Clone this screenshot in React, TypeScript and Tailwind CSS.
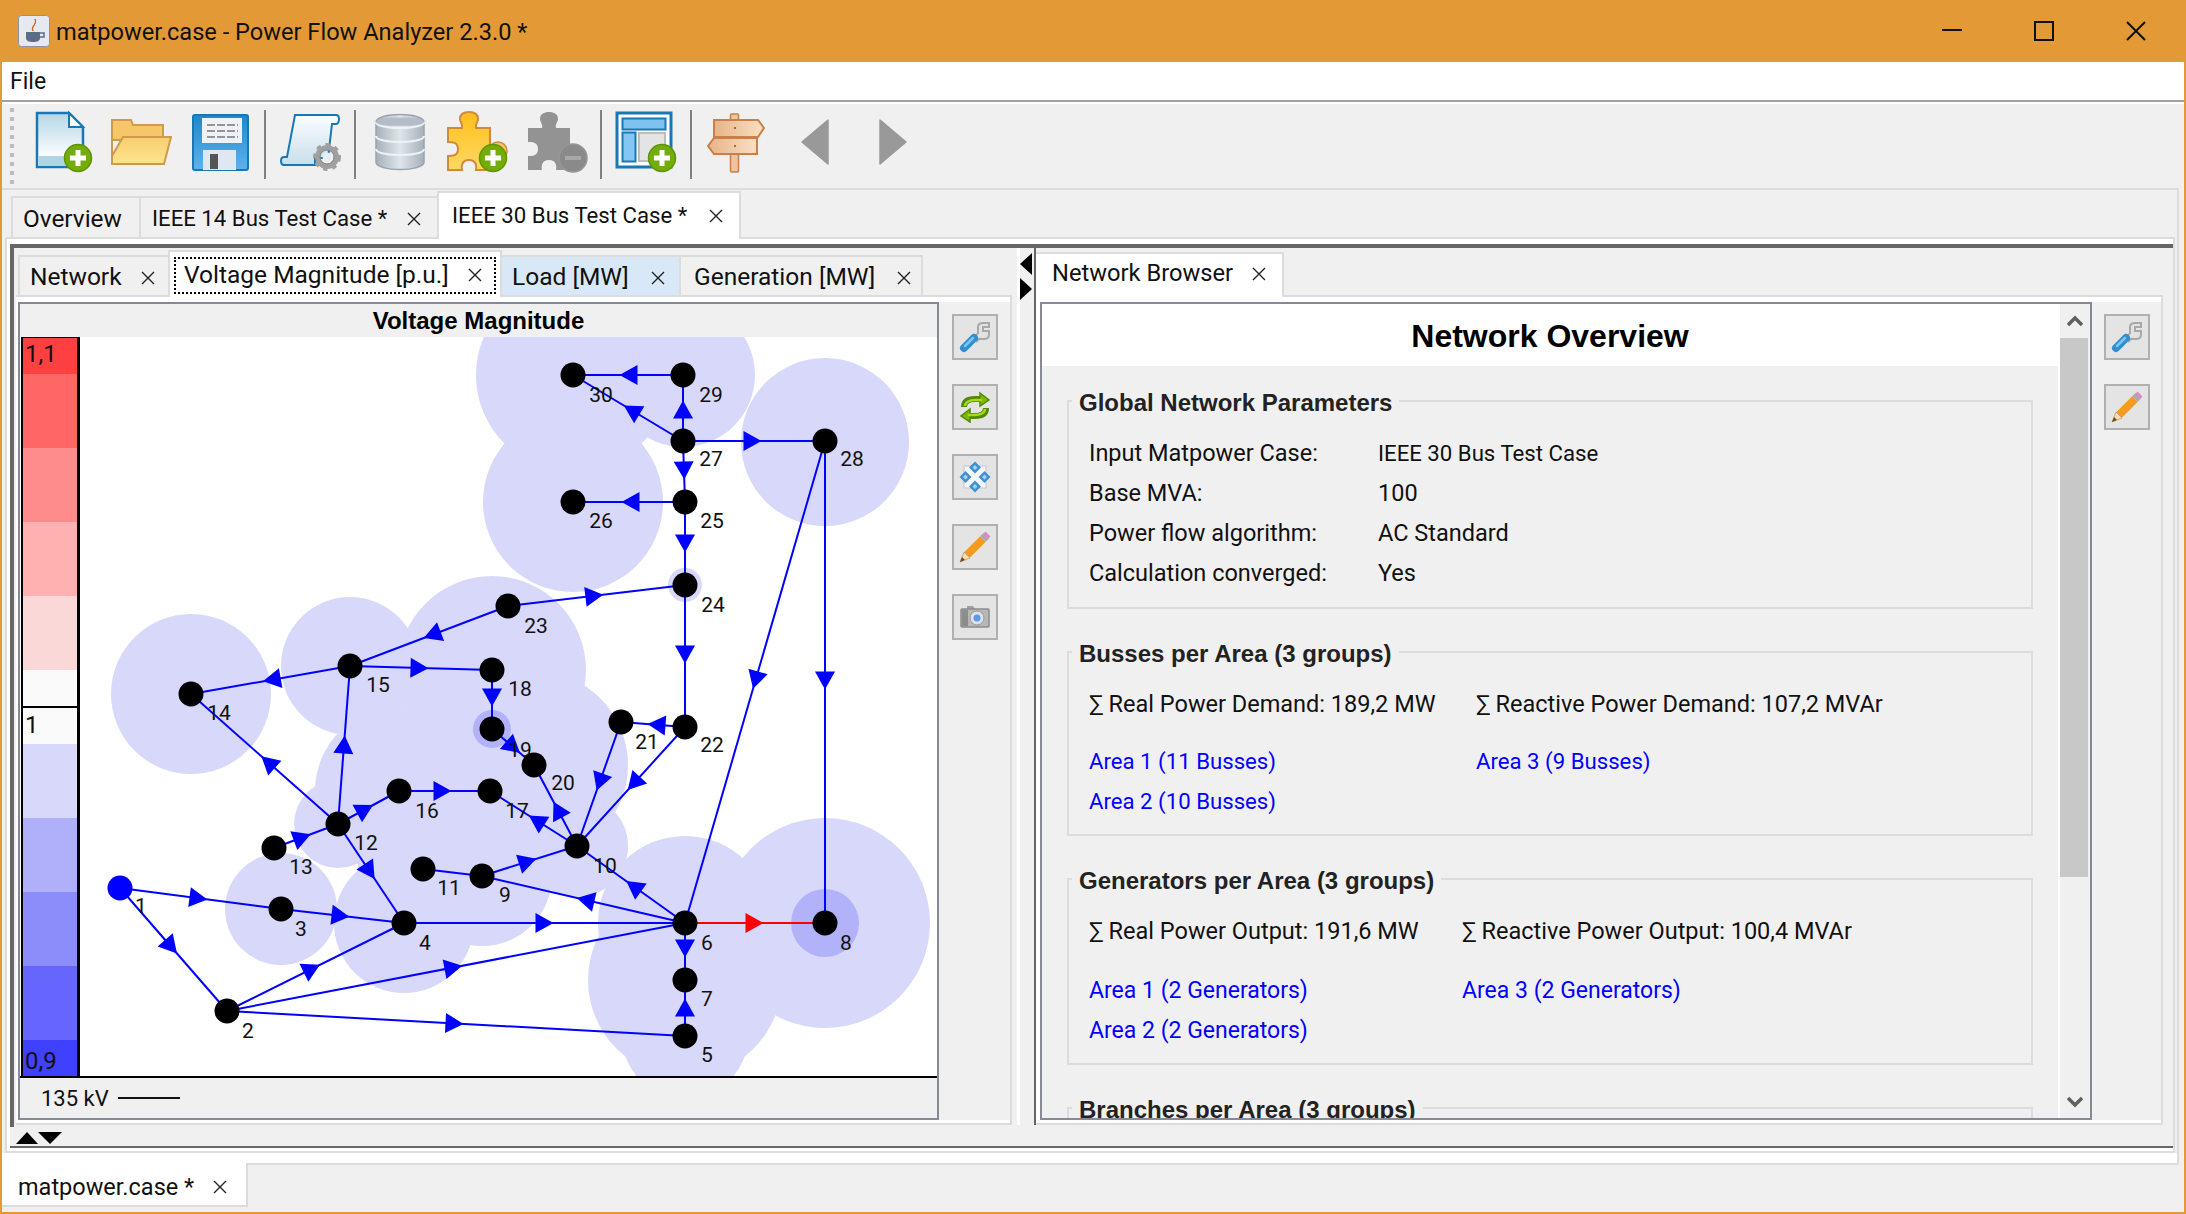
import type { ReactNode } from 'react';

const ui = "font-['Roboto',sans-serif]";

function TabClose({ className = '' }: { className?: string }) {
  return (
    <svg width="14" height="14" viewBox="0 0 14 14" className={`shrink-0 ${className}`}>
      <path d="M1 1L13 13M13 1L1 13" stroke="#222" strokeWidth="1.4" fill="none" />
    </svg>
  );
}

function PlusBadge({ cx, cy }: { cx: number; cy: number }) {
  return (
    <g>
      <circle cx={cx} cy={cy} r="13.5" fill="#74ad08" stroke="#5f9400" strokeWidth="1.5" />
      <rect x={cx - 8} y={cy - 2.5} width="16" height="5" fill="#fff" />
      <rect x={cx - 2.5} y={cy - 8} width="5" height="16" fill="#fff" />
    </g>
  );
}

const puzzlePath =
  'M4 18H18C19 14 16 12 16 9C16 4 20 2 25 2C30 2 34 4 34 9C34 12 31 14 32 18H46V60H32C33 56 32 50 25 50C18 50 17 56 18 60H4V46C8 46 14 46 14 39C14 32 8 32 4 32Z';

function ToolIcon({ children, className = 'ml-[12px]' }: { children: ReactNode; className?: string }) {
  return (
    <svg width="64" height="66" viewBox="0 0 64 66" className={`shrink-0 ${className}`}>
      {children}
    </svg>
  );
}

function Sep() {
  return <div className="ml-[12px] w-[2px] h-[69px] bg-[#808080] shrink-0" />;
}

function Toolbar() {
  return (
    <div className="h-[84px] pt-[6px] pl-[8px] flex items-start bg-[#f0f0f0]">
      <div className="flex flex-col gap-[5px] mt-[-2px] shrink-0">
        {[0, 1, 2, 3, 4, 5, 6, 7, 8].map((i) => (
          <div key={i} className="w-[4px] h-[4px] bg-[#bcbcbc]" />
        ))}
      </div>
      <ToolIcon className="ml-[18px]">
        <defs>
          <linearGradient id="paper" x1="0" y1="0" x2="0" y2="1">
            <stop offset="0" stopColor="#b6d6e6" />
            <stop offset="0.8" stopColor="#fafdff" />
          </linearGradient>
        </defs>
        <path d="M5 3H37L51 17V57H5Z" fill="url(#paper)" stroke="#1878b4" strokeWidth="2.5" />
        <rect x="6.5" y="46" width="43" height="10" fill="#b0d4e6" />
        <path d="M37 3V17H51Z" fill="#fff" stroke="#1878b4" strokeWidth="2" />
        <PlusBadge cx={46} cy={48} />
      </ToolIcon>
      <ToolIcon>
        <defs>
          <linearGradient id="folder" x1="0" y1="0" x2="0" y2="1">
            <stop offset="0" stopColor="#f8cd70" />
            <stop offset="1" stopColor="#fde58e" />
          </linearGradient>
        </defs>
        <path d="M4 10H23L25 15H55V30H4Z" fill="#f6c768" stroke="#cf9a4e" strokeWidth="2" />
        <path d="M4 10V54" stroke="#cf9a4e" strokeWidth="2" />
        <path d="M15 27H63L56 54H4V46Z" fill="url(#folder)" stroke="#cf9a4e" strokeWidth="2" />
      </ToolIcon>
      <ToolIcon className="ml-[16px]">
        <defs>
          <linearGradient id="disk" x1="0" y1="0" x2="0" y2="1">
            <stop offset="0" stopColor="#1f87cc" />
            <stop offset="1" stopColor="#5fb2ea" />
          </linearGradient>
        </defs>
        <rect x="5" y="5" width="55" height="55" rx="2" fill="url(#disk)" stroke="#1878b4" strokeWidth="2" />
        <rect x="14" y="8" width="40" height="25" fill="#eef2f6" />
        <path d="M19 15H50M19 21H50M19 27H50" stroke="#777" strokeWidth="1.5" strokeDasharray="8 2" />
        <rect x="15" y="40" width="33" height="20" fill="#dfe7f2" />
        <rect x="22" y="44" width="8" height="15" fill="#555" />
      </ToolIcon>
      <Sep />
      <ToolIcon>
        <defs>
          <linearGradient id="scroll" x1="0" y1="0" x2="0" y2="1">
            <stop offset="0" stopColor="#fafdff" />
            <stop offset="1" stopColor="#c8deec" />
          </linearGradient>
        </defs>
        <path
          d="M17 5H58C62 5 62 13 58 14H54L50 48H37V55H6C2 55 2 47 6 47H9Z"
          fill="url(#scroll)"
          stroke="#1878b4"
          strokeWidth="2"
        />
        <circle cx="49" cy="47" r="9.5" fill="none" stroke="#a0a0a0" strokeWidth="5" />
        <circle cx="49" cy="47" r="12.5" fill="none" stroke="#a0a0a0" strokeWidth="3" strokeDasharray="4.5 5" />
        <circle cx="49" cy="47" r="7" fill="none" stroke="#808080" strokeWidth="1" />
        <circle cx="49" cy="47" r="4.5" fill="#e6eef4" />
      </ToolIcon>
      <Sep />
      <ToolIcon>
        <defs>
          <linearGradient id="db" x1="0" y1="0" x2="1" y2="0">
            <stop offset="0" stopColor="#a6b0bb" />
            <stop offset="0.5" stopColor="#dfe5ea" />
            <stop offset="1" stopColor="#a6b0bb" />
          </linearGradient>
        </defs>
        <path d="M8 12C8 2 56 2 56 12V52C56 62 8 62 8 52Z" fill="url(#db)" stroke="#9aa3ad" strokeWidth="1.5" />
        <path d="M8 12C8 20 56 20 56 12" fill="none" stroke="#eef2f5" strokeWidth="2" />
        <path d="M8 26C8 34 56 34 56 26" fill="none" stroke="#eef2f5" strokeWidth="2" />
        <path d="M8 39C8 47 56 47 56 39" fill="none" stroke="#eef2f5" strokeWidth="2" />
        <path d="M8 12C8 6 56 6 56 12C56 17 8 17 8 12Z" fill="#b4bdc6" />
      </ToolIcon>
      <ToolIcon>
        <defs>
          <linearGradient id="puzzle" x1="0" y1="0" x2="0" y2="1">
            <stop offset="0" stopColor="#ffbe1a" />
            <stop offset="1" stopColor="#fdd964" />
          </linearGradient>
        </defs>
        <circle cx="54" cy="41" r="9" fill="#f5c56a" stroke="#cf8a3c" strokeWidth="1.5" />
        <path d={puzzlePath} fill="url(#puzzle)" stroke="#cf8a3c" strokeWidth="2" />
        <PlusBadge cx={49} cy={48} />
      </ToolIcon>
      <ToolIcon className="ml-[16px]">
        <path d={puzzlePath} fill="#939393" />
        <circle cx="49" cy="48" r="14" fill="#8a8a8a" stroke="#969696" strokeWidth="1.5" />
        <rect x="41" y="46" width="16" height="4" fill="#a8a8a8" />
      </ToolIcon>
      <Sep />
      <ToolIcon>
        <rect x="3" y="3" width="54" height="54" fill="#fff" stroke="#1878b4" strokeWidth="3" />
        <rect x="8.5" y="8.5" width="43" height="11" fill="#7fc2f0" stroke="#1878b4" strokeWidth="2" />
        <rect x="8.5" y="22.5" width="13" height="29" fill="#86c6f2" stroke="#1878b4" strokeWidth="2" />
        <rect x="25" y="23" width="26" height="28" fill="#e4e4e4" stroke="#bdbdbd" strokeWidth="2" />
        <PlusBadge cx={48} cy={48} />
      </ToolIcon>
      <Sep />
      <ToolIcon>
        <defs>
          <linearGradient id="board" x1="0" y1="0" x2="1" y2="0">
            <stop offset="0" stopColor="#e6b488" />
            <stop offset="1" stopColor="#fbdfc4" />
          </linearGradient>
        </defs>
        <rect x="26.5" y="4" width="8" height="58" rx="1" fill="#f0c49a" stroke="#c97f45" strokeWidth="1.5" />
        <path d="M10 10H54L60 18L54 27H10Z" fill="url(#board)" stroke="#c97f45" strokeWidth="2" />
        <path d="M10 28H53V44H10L4 36Z" fill="url(#board)" stroke="#c97f45" strokeWidth="2" />
        <circle cx="31" cy="18" r="1" fill="#8a4a20" />
        <circle cx="31" cy="36" r="1" fill="#8a4a20" />
      </ToolIcon>
      <ToolIcon className="ml-[16px]">
        <path d="M44 10V54L18 32Z" fill="#999999" stroke="#999999" strokeLinejoin="round" strokeWidth="1.5" />
      </ToolIcon>
      <ToolIcon className="ml-[14px]">
        <path d="M18 10V54L44 32Z" fill="#999999" stroke="#999999" strokeLinejoin="round" strokeWidth="1.5" />
      </ToolIcon>
    </div>
  );
}

function ToolButton({ children }: { children: ReactNode }) {
  return (
    <div className="w-[46px] h-[46px] border-2 border-[#b0b0b0] bg-[#e4e4e4] flex items-center justify-center">
      <svg width="32" height="32" viewBox="0 0 32 32">
        {children}
      </svg>
    </div>
  );
}

const WrenchIcon = (
  <>
    <path
      d="M15 17L19 12V6Q19 2 24 2H30V6H24V10H30V14Q30 18 25 18H20L17 21"
      fill="#e2e2e2"
      stroke="#a8a8a8"
      strokeWidth="2"
    />
    <path d="M5 27L15 17" stroke="#2f8fd0" strokeWidth="8" strokeLinecap="round" />
    <path d="M6 25L14 17" stroke="#7cc4f0" strokeWidth="2.5" strokeLinecap="round" />
  </>
);

const PencilIcon = (
  <>
    <path d="M8 24L24 8" stroke="#f59a1f" strokeWidth="8" />
    <path d="M5 21L11 27L1 31Z" fill="#f4dcb0" stroke="#a8753a" strokeWidth="0.5" />
    <path d="M1 31L3 26L6 29Z" fill="#6a4a2a" />
    <path d="M24 8L27 5" stroke="#aaa" strokeWidth="8" />
    <path d="M26.5 5.5L29 3" stroke="#d78ac6" strokeWidth="7" />
  </>
);

function SideTools({ children }: { children: ReactNode }) {
  return <div className="flex-1 bg-[#f0f0f0] pt-[12px] pl-[13px] flex flex-col gap-[24px]">{children}</div>;
}

type Edge = [number, number, number, number, string?];

const nodes: Record<number, [number, number]> = {
  1: [120, 888], 2: [227, 1011], 3: [281, 909], 4: [404, 923], 5: [685, 1036], 6: [685, 923],
  7: [685, 980], 8: [825, 923], 9: [482, 876], 10: [577, 846], 11: [423, 869], 12: [338, 824],
  13: [274, 848], 14: [191, 694], 15: [350, 666], 16: [399, 791], 17: [490, 791], 18: [492, 670],
  19: [492, 729], 20: [534, 765], 21: [621, 722], 22: [685, 727], 23: [508, 606], 24: [685, 585],
  25: [685, 502], 26: [573, 502], 27: [683, 441], 28: [825, 441], 29: [683, 375], 30: [573, 375],
};

// from, to, arrow centre x, arrow centre y
const edges: Edge[] = [
  [1, 3, 198, 898], [1, 2, 170, 947], [3, 4, 340, 916], [2, 4, 312, 970], [2, 6, 453, 968],
  [2, 5, 454, 1023], [4, 6, 544, 923], [12, 4, 368, 872], [13, 12, 302, 838], [12, 14, 268, 763],
  [12, 15, 344, 745], [12, 16, 365, 810], [16, 17, 442, 791], [10, 17, 536, 822], [10, 20, 558, 810],
  [9, 10, 527, 861], [6, 9, 586, 900], [6, 10, 633, 888], [28, 6, 757, 680], [28, 8, 825, 680],
  [6, 8, 754, 923, '#ff0000'], [6, 7, 685, 948], [5, 7, 685, 1008], [24, 22, 685, 654], [22, 10, 634, 783],
  [21, 10, 601, 782], [22, 21, 657, 725], [19, 20, 511, 749], [18, 19, 492, 697], [15, 18, 419, 668],
  [23, 15, 432, 633], [15, 14, 272, 678], [23, 24, 594, 597], [25, 24, 685, 543], [27, 25, 683, 470],
  [25, 26, 631, 502], [27, 28, 752, 441], [27, 29, 683, 410], [27, 30, 631, 412], [29, 30, 629, 375],
];

const areas: [number, number, number][] = [
  [191, 694, 80], [350, 666, 69], [492, 670, 94], [573, 375, 97], [683, 375, 72], [573, 502, 90],
  [825, 442, 84], [825, 923, 105], [685, 923, 87], [685, 980, 97], [685, 1036, 63], [404, 923, 70],
  [281, 909, 56], [338, 824, 44], [399, 791, 84], [482, 876, 70], [577, 846, 51], [423, 869, 65],
  [534, 765, 94], [685, 585, 17],
];

const labels: [string, number, number][] = [
  ['30', 601, 395], ['29', 711, 395], ['27', 711, 459], ['28', 852, 459], ['26', 601, 521], ['25', 712, 521],
  ['24', 713, 605], ['23', 536, 626], ['18', 520, 689], ['15', 378, 685], ['14', 219, 713], ['19', 520, 750],
  ['21', 647, 742], ['22', 712, 745], ['20', 563, 783], ['17', 517, 811], ['16', 427, 811], ['12', 366, 843],
  ['10', 605, 866], ['13', 301, 867], ['11', 449, 888], ['9', 505, 895], ['3', 301, 929], ['4', 425, 943],
  ['6', 707, 943], ['8', 846, 943], ['7', 707, 999], ['2', 248, 1031], ['5', 707, 1055], ['1', 141, 906],
];

function Arrow({ edge }: { edge: Edge }) {
  const [from, to, cx, cy, color] = edge;
  const [x1, y1] = nodes[from];
  const [x2, y2] = nodes[to];
  const len = Math.hypot(x2 - x1, y2 - y1);
  const dx = (x2 - x1) / len;
  const dy = (y2 - y1) / len;
  // snap the marker onto the line
  const t = (cx - x1) * dx + (cy - y1) * dy;
  const px = x1 + dx * t;
  const py = y1 + dy * t;
  const pts = [
    [px + dx * 9.5, py + dy * 9.5],
    [px - dx * 8.5 - dy * 10, py - dy * 8.5 + dx * 10],
    [px - dx * 8.5 + dy * 10, py - dy * 8.5 - dx * 10],
  ];
  return <polygon points={pts.map((p) => p.join(',')).join(' ')} fill={color ?? '#0000ff'} />;
}

function NetworkMap() {
  return (
    <svg width="857" height="739" viewBox="80 337 857 739" className="block bg-white shrink-0">
      {areas.map(([x, y, r], i) => (
        <circle key={i} cx={x} cy={y} r={r} fill="#d8d8fa" />
      ))}
      <circle cx="825" cy="923" r="34" fill="#b2b2fa" />
      <circle cx="492" cy="729" r="19" fill="#b2b2fa" />
      {edges.map((e, i) => (
        <line
          key={i}
          x1={nodes[e[0]][0]}
          y1={nodes[e[0]][1]}
          x2={nodes[e[1]][0]}
          y2={nodes[e[1]][1]}
          stroke={e[4] ?? '#0000ff'}
          strokeWidth="2"
        />
      ))}
      <line x1="423" y1="869" x2="482" y2="876" stroke="#0000ff" strokeWidth="2" />
      {edges.map((e, i) => (
        <Arrow key={i} edge={e} />
      ))}
      {Object.entries(nodes).map(([id, [x, y]]) => (
        <circle key={id} cx={x} cy={y} r="12.5" fill={id === '1' ? '#0000ff' : '#000'} />
      ))}
      {labels.map(([t, x, y]) => (
        <text key={t} x={x} y={y} textAnchor="middle" dominantBaseline="central" fontSize="21" fontFamily="Roboto, sans-serif" fill="#111">
          {t}
        </text>
      ))}
    </svg>
  );
}

function Legend() {
  return (
    <div className="w-[59px] ml-[1px] shrink-0 flex flex-col border-t border-l-2 border-r-[3px] border-black text-[24px] leading-none text-[#111]">
      <div className="h-[36px] bg-[#ff4040] pl-[2px] pt-[4px]">1,1</div>
      <div className="h-[74px] bg-[#ff6666]" />
      <div className="h-[74px] bg-[#ff8c8c]" />
      <div className="h-[74px] bg-[#ffb0b0]" />
      <div className="h-[74px] bg-[#fad8d8]" />
      <div className="h-[36px] bg-[#fafafa]" />
      <div className="h-[2px] bg-black" />
      <div className="h-[36px] bg-[#fafafa] pl-[2px] pt-[5px]">1</div>
      <div className="h-[74px] bg-[#d8d8fa]" />
      <div className="h-[74px] bg-[#b0b0fa]" />
      <div className="h-[74px] bg-[#8c8cfa]" />
      <div className="h-[74px] bg-[#6666ff]" />
      <div className="h-[36px] bg-[#4040ff] pl-[2px] pt-[9px]">0,9</div>
    </div>
  );
}

function MapPanel() {
  return (
    <div className="w-[921px] h-[818px] shrink-0 border-2 border-[#878a96] flex flex-col bg-[#f0f0f0]">
      <div className="h-[33px] flex items-center justify-center font-['Liberation_Sans',sans-serif] font-bold text-[24px] text-black">
        Voltage Magnitude
      </div>
      <div className="flex h-[739px] bg-white">
        <Legend />
        <NetworkMap />
      </div>
      <div className="h-[42px] border-t-2 border-black flex items-center pl-[21px] text-[22px] text-[#111]">
        <span className="w-[77px] whitespace-nowrap">135 kV</span>
        <div className="w-[62px] h-[2px] bg-[#111]" />
      </div>
    </div>
  );
}

function InnerTab({ width, textWidth, pad, children }: { width: string; textWidth: string; pad: string; children: string }) {
  return (
    <div className={`${width} ${pad} h-[40px] pt-[3px] border-2 border-b-0 border-[#dcdcdc] -ml-[2px] first:ml-0 flex items-center text-[24.5px] text-[#111]`}>
      <span className={`${textWidth} whitespace-nowrap`}>{children}</span>
      <TabClose />
    </div>
  );
}

function LeftPane() {
  return (
    <div className="w-[998px] h-[877px] pl-[2px] shrink-0 flex flex-col">
      <div className="h-[47px] flex items-end pl-[2px]">
        <InnerTab width="w-[152px]" textWidth="w-[111px]" pad="pl-[10px]">Network</InnerTab>
        <div className="w-[334px] h-[47px] -mb-[2px] -ml-[2px] relative border-2 border-b-0 border-[#dcdcdc] bg-white pt-[5px] px-[4px]">
          <div className="h-[37px] border-2 border-dotted border-black flex items-center pl-[8px] pb-[1px] text-[24.5px] text-[#111]">
            <span className="w-[284px] whitespace-nowrap">Voltage Magnitude [p.u.]</span>
            <TabClose />
          </div>
        </div>
        <div className="w-[181px] h-[40px] pt-[3px] border-2 border-b-0 border-[#dcdcdc] -ml-[2px] bg-[#d9e8f6] flex items-center pl-[10px] text-[24.5px] text-[#111]">
          <span className="w-[139px] whitespace-nowrap">Load [MW]</span>
          <TabClose />
        </div>
        <InnerTab width="w-[244px]" textWidth="w-[203px]" pad="pl-[13px]">Generation [MW]</InnerTab>
      </div>
      <div className="h-[830px] border-2 border-[#dcdcdc] border-l-0 bg-white pl-[2px] pt-[5px] pb-[3px] flex">
        <MapPanel />
        <SideTools>
          <ToolButton>{WrenchIcon}</ToolButton>
          <ToolButton>
            <path d="M5 16C5 10 10 8 16 8H23" fill="none" stroke="#4f8a00" strokeWidth="6" />
            <path d="M21 2L30 9L21 15Z" fill="#7fb800" stroke="#4f8a00" strokeWidth="1.5" />
            <path d="M27 17C27 23 22 25 16 25H9" fill="none" stroke="#4f8a00" strokeWidth="6" />
            <path d="M11 18L2 25L11 31Z" fill="#7fb800" stroke="#4f8a00" strokeWidth="1.5" />
            <path d="M6 15C6 11 11 9 16 9H23" fill="none" stroke="#a8d820" strokeWidth="2.5" />
            <path d="M26 18C26 22 21 24 16 24H9" fill="none" stroke="#a8d820" strokeWidth="2.5" />
          </ToolButton>
          <ToolButton>
            <rect x="5" y="5" width="22" height="22" fill="#f6f7fb" stroke="#bfc4cc" />
            <path d="M16 0.5L22 6.5L16 12.5L10 6.5Z" fill="#3f92d2" />
            <path d="M16 19.5L22 25.5L16 31.5L10 25.5Z" fill="#3f92d2" />
            <path d="M0.5 16L6.5 10L12.5 16L6.5 22Z" fill="#3f92d2" />
            <path d="M19.5 16L25.5 10L31.5 16L25.5 22Z" fill="#3f92d2" />
            <path d="M16 4L18.5 6.5L16 9L13.5 6.5ZM16 23L18.5 25.5L16 28L13.5 25.5ZM4 16L6.5 13.5L9 16L6.5 18.5ZM23 16L25.5 13.5L28 16L25.5 18.5Z" fill="#a6d2f2" />
          </ToolButton>
          <ToolButton>{PencilIcon}</ToolButton>
          <ToolButton>
            <path d="M8 8V5H14L16 8Z" fill="#a0a0a0" />
            <rect x="2" y="8" width="28" height="18" rx="1" fill="#b8b8b8" stroke="#8c8c8c" strokeWidth="1.5" />
            <rect x="3" y="9" width="6" height="16" fill="#8c8c8c" />
            <circle cx="18" cy="17" r="7" fill="#e0e0ea" stroke="#9a9a9a" />
            <circle cx="18" cy="17" r="3.5" fill="#5a9ae8" />
          </ToolButton>
        </SideTools>
      </div>
    </div>
  );
}

function PaneDivider() {
  return (
    <div className="w-[24px] h-[877px] shrink-0 flex">
      <div className="w-[5px] bg-[#f0f0f0]" />
      <div className="w-[3px] bg-white" />
      <div className="w-[14px] pt-[5px] flex flex-col gap-[3px]">
        <div className="w-0 h-0 border-y-[11px] border-y-transparent border-r-[12px] border-r-black" />
        <div className="w-0 h-0 border-y-[11px] border-y-transparent border-l-[12px] border-l-black" />
      </div>
      <div className="w-[2px] bg-[#666666]" />
    </div>
  );
}

function Box({ title, height, children }: { title: string; height: string; children?: ReactNode }) {
  return (
    <div className={`${height} w-[966px] shrink-0 ml-[25px] border-2 border-[#dcdcdc]`}>
      <div className="h-[26px] -mt-[12px] ml-[3px] w-fit px-[7px] bg-[#f0f0f0] font-['Liberation_Sans',sans-serif] font-bold text-[24px] leading-[26px] text-[#222] whitespace-nowrap">
        {title}
      </div>
      {children}
    </div>
  );
}

function InfoRow({ label, value, valueClass = '' }: { label: string; value: string; valueClass?: string }) {
  return (
    <div className="h-[40px] flex items-center pl-[20px] text-[23.5px] text-[#111] whitespace-nowrap">
      <span className="w-[289px]">{label}</span>
      <span className={valueClass}>{value}</span>
    </div>
  );
}

function AreaRows({ col, size, rows }: { col: string; size: string; rows: [string, string?][] }) {
  return (
    <>
      {rows.map(([a, b]) => (
        <div key={a} className={`h-[40px] flex items-center pl-[20px] text-[#0000ff] whitespace-nowrap ${size}`}>
          <span className={col}>{a}</span>
          {b && <span>{b}</span>}
        </div>
      ))}
    </>
  );
}

function BrowserContent() {
  return (
    <div className="w-[1016px] h-[814px] shrink-0 overflow-hidden flex flex-col bg-[#f0f0f0]">
      <div className="h-[62px] shrink-0 pt-[2px] bg-white flex items-center justify-center font-['Liberation_Sans',sans-serif] font-bold text-[32px] text-black">
        Network Overview
      </div>
      <div className="h-[34px] shrink-0" />
      <Box title="Global Network Parameters" height="h-[209px]">
        <div className="mt-[18px]">
          <InfoRow label="Input Matpower Case:" value="IEEE 30 Bus Test Case" valueClass="text-[22.2px]" />
          <InfoRow label="Base MVA:" value="100" />
          <InfoRow label="Power flow algorithm:" value="AC Standard" />
          <InfoRow label="Calculation converged:" value="Yes" />
        </div>
      </Box>
      <div className="h-[42px] shrink-0" />
      <Box title="Busses per Area (3 groups)" height="h-[185px]">
        <div className="mt-[18px] h-[40px] flex items-center pl-[20px] text-[23.5px] text-[#111] whitespace-nowrap">
          <span className="w-[387px]">∑ Real Power Demand: 189,2 MW</span>
          <span>∑ Reactive Power Demand: 107,2 MVAr</span>
        </div>
        <div className="mt-[17px]">
          <AreaRows col="w-[387px]" size="text-[22.2px]" rows={[['Area 1 (11 Busses)', 'Area 3 (9 Busses)'], ['Area 2 (10 Busses)']]} />
        </div>
      </Box>
      <div className="h-[42px] shrink-0" />
      <Box title="Generators per Area (3 groups)" height="h-[187px]">
        <div className="mt-[18px] h-[40px] flex items-center pl-[20px] text-[23.5px] text-[#111] whitespace-nowrap">
          <span className="w-[373px]">∑ Real Power Output: 191,6 MW</span>
          <span>∑ Reactive Power Output: 100,4 MVAr</span>
        </div>
        <div className="mt-[19px]">
          <AreaRows col="w-[373px]" size="text-[23px]" rows={[['Area 1 (2 Generators)', 'Area 3 (2 Generators)'], ['Area 2 (2 Generators)']]} />
        </div>
      </Box>
      <div className="h-[42px] shrink-0" />
      <Box title="Branches per Area (3 groups)" height="h-[100px]" />
    </div>
  );
}

function ScrollBar() {
  return (
    <div className="w-[32px] h-[814px] shrink-0 border-l-2 border-white flex flex-col bg-[#f0f0f0]">
      <div className="h-[34px] flex items-center justify-center">
        <svg width="16" height="12" viewBox="0 0 16 12">
          <path d="M1 10L8 3L15 10" fill="none" stroke="#606060" strokeWidth="3.5" />
        </svg>
      </div>
      <div className="h-[539px] bg-[#c8c8c8] mr-[2px]" />
      <div className="flex-1 flex items-end justify-center pb-[10px]">
        <svg width="16" height="12" viewBox="0 0 16 12">
          <path d="M1 2L8 9L15 2" fill="none" stroke="#606060" strokeWidth="3.5" />
        </svg>
      </div>
    </div>
  );
}

function RightPane() {
  return (
    <div className="w-[1127px] h-[877px] shrink-0 flex flex-col">
      <div className="h-[47px] flex items-end">
        <div className="w-[248px] h-[45px] -mb-[2px] pb-[3px] relative border-t-2 border-r-2 border-[#dcdcdc] bg-white flex items-center pl-[16px] text-[23.7px] text-[#111]">
          <span className="w-[200px] whitespace-nowrap">Network Browser</span>
          <TabClose />
        </div>
      </div>
      <div className="h-[830px] border-t-2 border-b-2 border-r-2 border-[#dcdcdc] bg-white pl-[4px] pt-[5px] pb-[3px] flex">
        <div className="w-[1052px] h-[818px] shrink-0 border-2 border-[#878a96] flex">
          <BrowserContent />
          <ScrollBar />
        </div>
        <div className="flex-1 bg-[#f0f0f0] pt-[12px] pl-[12px] flex flex-col gap-[24px]">
          <ToolButton>{WrenchIcon}</ToolButton>
          <ToolButton>{PencilIcon}</ToolButton>
        </div>
      </div>
    </div>
  );
}

export default function App() {
  return (
    <div className={`w-[2186px] h-[1214px] overflow-hidden flex flex-col border-x-2 border-b-2 border-[#e39a36] bg-[#f0f0f0] ${ui}`}>
      {/* title bar */}
      <div className="h-[62px] shrink-0 -mx-[2px] bg-[#e39a36] flex items-center pl-[18px] text-[23.6px] text-[#111]">
        <svg width="32" height="32" viewBox="0 0 32 32" className="shrink-0">
          <rect x="0.5" y="0.5" width="31" height="31" rx="3" fill="#e6eaf0" stroke="#8a93a0" />
          <path d="M17 4C20 9 12 11 15 16C13 11 19 10 17 4Z" fill="#e0560f" stroke="#e0560f" />
          <path d="M8 17H22V23C22 26 19 27 15 27C11 27 8 26 8 23Z" fill="#5b6d84" />
          <path d="M22 18H26V22H22" fill="none" stroke="#5b6d84" strokeWidth="1.5" />
        </svg>
        <span className="ml-[6px] w-[1850px] pt-[3px] whitespace-nowrap">matpower.case - Power Flow Analyzer 2.3.0 *</span>
        <div className="w-[92px] flex justify-center">
          <div className="w-[20px] h-[2px] bg-[#111] -mt-[2px]" />
        </div>
        <div className="w-[92px] flex justify-center">
          <div className="w-[20px] h-[20px] border-2 border-[#111]" />
        </div>
        <div className="w-[92px] flex justify-center">
          <svg width="20" height="20" viewBox="0 0 20 20">
            <path d="M1 1L19 19M19 1L1 19" stroke="#111" strokeWidth="2" />
          </svg>
        </div>
      </div>
      {/* menu */}
      <div className="h-[40px] shrink-0 bg-white border-b-2 border-[#a0a0a0] flex items-center pl-[8px] pt-[3px] text-[23px] text-[#111]">
        File
      </div>
      <div className="h-[2px] shrink-0 bg-white" />
      <Toolbar />
      {/* outer tab pane */}
      <div className="h-[977px] w-[2177px] shrink-0 border-t-2 border-r-2 border-b-2 border-[#dcdcdc] flex flex-col">
        <div className="h-[47px] shrink-0 flex items-end pl-[9px] text-[#111]">
          <div className="w-[130px] h-[41px] pt-[3px] text-[24.4px] border-2 border-[#dcdcdc] border-b-0 flex items-center pl-[10px]">Overview</div>
          <div className="w-[300px] h-[41px] pt-[3px] -ml-[2px] text-[22.2px] border-2 border-[#dcdcdc] border-b-0 flex items-center pl-[11px]">
            <span className="w-[255px] whitespace-nowrap">IEEE 14 Bus Test Case *</span>
            <TabClose />
          </div>
          <div className="w-[304px] h-[48px] -ml-[2px] -mb-[2px] text-[22.2px] relative border-2 border-[#dcdcdc] border-b-0 bg-white flex items-center pl-[13px]">
            <span className="w-[257px] whitespace-nowrap">IEEE 30 Bus Test Case *</span>
            <TabClose />
          </div>
        </div>
        <div className="h-[916px] w-[2170px] ml-[3px] shrink-0 border-2 border-[#dcdcdc] bg-white pt-[5px] flex flex-col">
          <div className="h-[883px] w-[2163px] ml-[3px] shrink-0 border-t-4 border-l-4 border-[#666666] bg-[#f0f0f0] flex">
            <LeftPane />
            <PaneDivider />
            <RightPane />
          </div>
          <div className="h-[21px] w-[2163px] ml-[3px] shrink-0 bg-[#f0f0f0] border-b-2 border-[#666666] flex items-end pl-[6px] pb-[2px]">
            <div className="w-0 h-0 border-x-[11px] border-x-transparent border-b-[12px] border-b-black" />
            <div className="w-0 h-0 border-x-[12px] border-x-transparent border-t-[12px] border-t-black" />
          </div>
        </div>
        <div className="flex-1 bg-white" />
      </div>
      {/* bottom tab */}
      <div className="flex-1 flex items-start">
        <div className="w-[246px] h-[44px] pt-[8px] -mt-[2px] relative bg-white border-r-2 border-b-2 border-[#dcdcdc] flex items-center pl-[16px] text-[23.5px] text-[#111]">
          <span className="w-[195px] whitespace-nowrap">matpower.case *</span>
          <TabClose className="-mt-[3px]" />
        </div>
      </div>
    </div>
  );
}
